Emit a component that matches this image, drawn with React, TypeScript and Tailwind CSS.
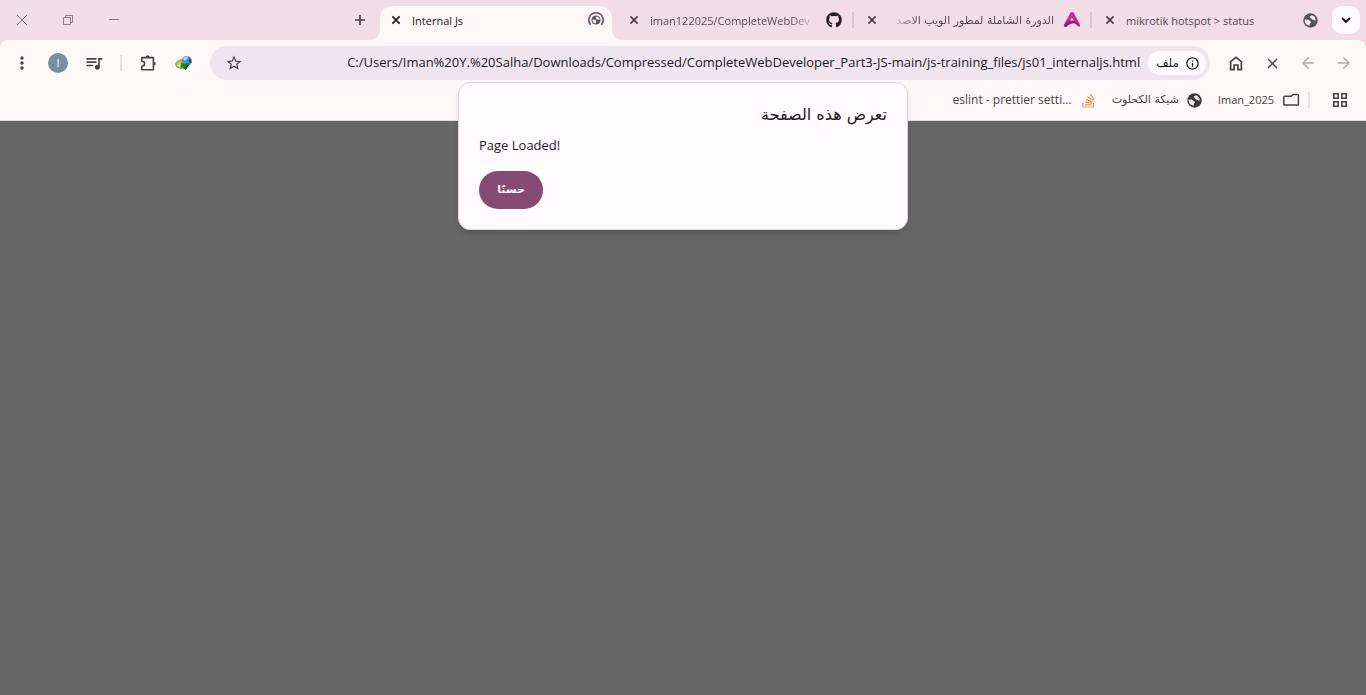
import type { ReactNode } from "react";
import { FaGithub } from "react-icons/fa";
import {
  MdArrowBack,
  MdArrowForward,
  MdClose,
  MdInfoOutline,
  MdMoreVert,
  MdQueueMusic,
  MdStarBorder,
} from "react-icons/md";

const iconButton = "flex h-7 w-7 shrink-0 items-center justify-center rounded-full";

function Globe({ size, color }: { size: number; color: string }) {
  return (
    <svg width={size} height={size} viewBox="0 0 16 16" aria-hidden="true">
      <circle cx="8" cy="8" r="7.7" fill={color} />
      <path
        d="M1.8 7.2 C3.6 6.8 5.8 7 6.8 8 C7.6 8.8 8.4 8.8 8.5 9.8 C8.6 10.8 7.4 10.8 7.2 11.8 V13.4 C4 13.2 1.5 11 1.8 7.2 Z"
        fill="#f6e8ee"
      />
      <path
        d="M9.2 2.4 C8.6 3.2 7.6 3 7.2 3.8 C6.8 4.6 7.8 5 8.6 5.2 C9 6.4 9.4 6.9 10.6 6.9 C11.2 7.9 12.4 8 13.6 8 C13.8 5.4 12 2.8 9.2 2.4 Z"
        fill="#f6e8ee"
      />
    </svg>
  );
}

function LoadingGlobe() {
  return (
    <svg width="16" height="16" viewBox="0 0 16 16" aria-hidden="true">
      <path d="M2.7 12.8 A7.2 7.2 0 1 1 13.3 12.8" fill="none" stroke="#854b73" strokeWidth="1.7" />
      <circle cx="8" cy="8" r="4.6" fill="#55555a" />
      <path d="M4.4 7.7 C6 7.4 7.6 8 8.2 9 L7.6 11.4 C5.8 11.2 4.3 9.6 4.4 7.7 Z" fill="#fff" />
      <path d="M8.7 4.6 L7.6 6 L9 7.4 L11.6 7.8 C11.6 6 10.2 4.8 8.7 4.6 Z" fill="#fff" />
    </svg>
  );
}

function AcademyLogo() {
  return (
    <svg width="18" height="18" viewBox="0 0 18 18" aria-hidden="true">
      <path d="M7.4 2 Q9 0 10.8 2 L17 13.6 Q17.6 16 15.6 15.6 Q13.4 14.8 12.4 12.4 L9 6.4 L5.8 11.6 Q4.4 15.6 1.8 15.8 Q0.2 15.4 1 13.4 Z" fill="#c42a92" />
      <path d="M1 15 Q3.6 9.4 9 9.4 Q13.6 9.8 16.8 14.8 Q12.6 11.6 9 12.6 Q5.6 13.4 3.4 15.8 Q1.6 16.6 1 15 Z" fill="#951c7c" />
    </svg>
  );
}

function DownloadManagerIcon() {
  return (
    <svg width="18" height="16" viewBox="0 0 18 16" aria-hidden="true">
      <ellipse cx="6.4" cy="9.2" rx="5.6" ry="4.2" fill="#b7d27a" stroke="#4f9a70" strokeWidth="1" />
      <path d="M1.6 8.2 Q3.4 3.2 8 3.8 L7 7.4 Q4 7 1.6 8.2 Z" fill="#e9a13c" />
      <path d="M2.8 10.8 Q4.6 8.2 7.6 9 L8 11.4 Q5 13 2.8 10.8 Z" fill="#f1df8a" />
      <circle cx="11.8" cy="6" r="5" fill="#4a90d0" />
      <path d="M8.2 3.4 Q10 0.9 13 1.6 Q12.4 5 9 6 Z" fill="#b4daf4" />
      <path d="M14.2 2.4 Q16.8 5 16.6 8 L13.8 7 Z" fill="#1c4776" />
      <path d="M6 7.4 L8.6 8.8 L14.8 8 L10.8 15 L7.4 12.6 L5.4 12.6 Z" fill="#198a22" />
      <path d="M14.8 8 L10.8 15 L9.6 12.4 Z" fill="#0a4d12" />
    </svg>
  );
}

function Puzzle() {
  return (
    <svg width="18" height="18" viewBox="0 0 18 18" fill="none" stroke="#4b4146" aria-hidden="true">
      <path
        d="M2.8 3.6 H14.4 V15.8 H2.8 V12.2 C4.6 12.2 5.6 11 5.6 9.7 C5.6 8.4 4.6 7.2 2.8 7.2 Z"
        strokeWidth="1.6"
        strokeLinejoin="round"
      />
      <path d="M6.8 3.2 A1.9 1.9 0 0 1 10.6 3.2 Z M14.8 7.8 A1.9 1.9 0 0 1 14.8 11.6 Z" fill="#4b4146" stroke="none" />
    </svg>
  );
}

function Home() {
  return (
    <svg width="14" height="15" viewBox="0 0 14 15" fill="none" stroke="#4b4146" strokeWidth="1.7" aria-hidden="true">
      <path d="M1.6 5.7 L7 1.4 L12.4 5.7 V13.6 H8.9 V9 H5.1 V13.6 H1.6 Z" />
    </svg>
  );
}

function Folder() {
  return (
    <svg width="18" height="14" viewBox="0 0 18 14" fill="none" stroke="#4b4146" strokeWidth="1.5" aria-hidden="true">
      <path d="M2.6 3.2 H9.2 L11 1.6 H15.6 Q16.4 1.6 16.4 2.4 V11.2 Q16.4 12 15.6 12 H2.6 Q1.8 12 1.8 11.2 V4 Q1.8 3.2 2.6 3.2 Z" />
    </svg>
  );
}

function StackLogo() {
  return (
    <svg width="14" height="15" viewBox="0 0 14 15" fill="none" aria-hidden="true">
      <path d="M1 9.5 V14 H11.4 V9.5" stroke="#b9a99a" strokeWidth="1.2" />
      <path d="M3 11.8 H9.6 M3.2 9.2 L9.8 10.4 M4 6.4 L10.2 9 M5.6 3.6 L11 7.6 M8.4 1.2 L12.2 6.6" stroke="#ea9440" strokeWidth="1.2" />
    </svg>
  );
}

function TabCross() {
  return (
    <svg width="10" height="10" viewBox="0 0 10 10" fill="none" stroke="currentColor" strokeWidth="1.7" aria-hidden="true">
      <path d="M1.4 1.4 L8.6 8.6 M8.6 1.4 L1.4 8.6" />
    </svg>
  );
}

function Tab({ title, icon, rtl = false, fade = true }: { title: string; icon: ReactNode; rtl?: boolean; fade?: boolean }) {
  return (
    <div className="min-w-0 flex-[236]">
      <div className="flex h-6 items-center gap-2 pl-2.5 pr-2">
        <button aria-label={"Close " + title} className="flex h-4 w-4 shrink-0 items-center justify-center text-[#4b3f45]">
          <TabCross />
        </button>
        <a
          href="#tab"
          dir={rtl ? "rtl" : "ltr"}
          className={
            "min-w-0 flex-1 overflow-hidden whitespace-nowrap pt-0.5 text-[11px] text-[#594a51] " +
            (rtl
              ? "font-['DejaVu_Sans',sans-serif] [mask-image:linear-gradient(to_left,#000_80%,transparent)]"
              : fade
                ? "[mask-image:linear-gradient(to_right,#000_85%,transparent)]"
                : "")
          }
        >
          {title}
        </a>
        <span className="flex w-5 shrink-0 justify-center">{icon}</span>
      </div>
    </div>
  );
}

function TabStrip() {
  return (
    <header className="flex h-10 items-center bg-[#f2dce5]">
      <div className="flex flex-[380] items-center justify-between">
        <div className="flex items-center text-[#8e7d85]">
          <button aria-label="Close window" className="flex h-8 w-11 items-center justify-center">
            <svg width="12" height="12" viewBox="0 0 12 12" stroke="currentColor" fill="none">
              <path d="M1 1 L11 11 M11 1 L1 11" />
            </svg>
          </button>
          <button aria-label="Restore window" className="flex h-8 w-12 items-center justify-center">
            <svg width="12" height="12" viewBox="0 0 12 12" stroke="currentColor" fill="none">
              <path d="M1.5 3.5 H8.5 V10.5 H1.5 Z M3.5 3.5 V1.5 H10.5 V8.5 H8.5" />
            </svg>
          </button>
          <button aria-label="Minimize window" className="flex h-8 w-11 items-center justify-center">
            <svg width="12" height="12" viewBox="0 0 12 12" stroke="currentColor" fill="none">
              <path d="M1 5.5 H11" />
            </svg>
          </button>
        </div>
        <button aria-label="New tab" className="flex h-7 w-10 items-center justify-center text-[#4b3f45]">
          <svg width="12" height="12" viewBox="0 0 12 12" stroke="currentColor" strokeWidth="1.7" fill="none">
            <path d="M6 1 V11 M1 6 H11" />
          </svg>
        </button>
      </div>
      <nav aria-label="Tabs" className="flex min-w-0 flex-[948] items-center self-stretch">
        <div className="relative mr-1 flex h-[34px] min-w-0 flex-[232] items-center self-end rounded-t-xl bg-[#fef7f7] pb-1.5">
          <svg width="10" height="10" viewBox="0 0 10 10" className="absolute -left-2.5 bottom-0" fill="#fef7f7" aria-hidden="true">
            <path d="M10 0 V10 H0 A10 10 0 0 0 10 0 Z" />
          </svg>
          <svg width="10" height="10" viewBox="0 0 10 10" className="absolute -right-2.5 bottom-0" fill="#fef7f7" aria-hidden="true">
            <path d="M0 0 V10 H10 A10 10 0 0 1 0 0 Z" />
          </svg>
          <div className="flex min-w-0 flex-1 items-center gap-2 px-2">
            <button aria-label="Close Internal Js" className="flex h-4 w-4 items-center justify-center text-[#211a1e]">
              <TabCross />
            </button>
            <a href="#tab" className="min-w-0 flex-1 truncate pt-0.5 text-[11px] text-[#211a1e]">Internal Js</a>
            <LoadingGlobe />
          </div>
        </div>
        <Tab title="iman122025/CompleteWebDev" icon={<FaGithub size={16} color="#24202a" />} />
        <span className="h-4 w-0.5 bg-[#dcc5cf]" />
        <Tab title="الدورة الشاملة لمطور الويب الاصد" rtl icon={<AcademyLogo />} />
        <span className="h-4 w-0.5 bg-[#dcc5cf]" />
        <Tab title="mikrotik hotspot &gt; status" fade={false} icon={<Globe size={15} color="#55515a" />} />
      </nav>
      <button aria-label="Search tabs" className="ml-1 mr-1.5 flex h-7 w-7 shrink-0 items-center justify-center rounded-[10px] bg-[#fffbfe]">
        <svg width="10" height="8" viewBox="0 0 10 8" fill="none" stroke="#111" strokeWidth="1.8">
          <path d="M1 2 L5 6 L9 2" />
        </svg>
      </button>
    </header>
  );
}

function Toolbar() {
  return (
    <div className="flex h-[46px] items-center gap-2 px-2 text-[#4b4146]">
      <button aria-label="Menu" className={iconButton}><MdMoreVert size={20} /></button>
      <button aria-label="Profile" className={iconButton}>
        <span className="flex h-5 w-5 items-center justify-center rounded-full bg-[#78909c] text-[11px] leading-5 text-white">I</span>
      </button>
      <button aria-label="Media" className={iconButton}><MdQueueMusic size={20} /></button>
      <span className="mx-1 h-4 w-0.5 bg-[#f6dbe7]" />
      <button aria-label="Extensions" className={iconButton}><Puzzle /></button>
      <button aria-label="Download manager" className={iconButton}><DownloadManagerIcon /></button>
      <div className="ml-1 flex h-[34px] min-w-0 flex-1 items-center gap-2 rounded-full bg-[#f0e4ef] pl-2.5 pr-1">
        <button aria-label="Bookmark" className={iconButton}><MdStarBorder size={18} /></button>
        <input
          aria-label="Address"
          dir="ltr"
          defaultValue="C:/Users/Iman%20Y.%20Salha/Downloads/Compressed/CompleteWebDeveloper_Part3-JS-main/js-training_files/js01_internaljs.html"
          className="min-w-0 flex-1 bg-transparent text-right text-[13px] text-[#211a1e] outline-none"
        />
        <button className="flex h-6 shrink-0 items-center gap-1.5 rounded-full bg-[#fffbfe] pl-2 pr-1.5 text-[#211a1e]">
          <span className="font-['DejaVu_Sans',sans-serif] text-xs">ملف</span>
          <MdInfoOutline size={15} />
        </button>
      </div>
      <div className="flex items-center gap-2 pl-1">
        <button aria-label="Home" className={iconButton}><Home /></button>
        <button aria-label="Stop" className={iconButton}><MdClose size={17} /></button>
        <button aria-label="Back" className={iconButton + " text-[#b3a9ad]"}><MdArrowBack size={18} /></button>
        <button aria-label="Forward" className={iconButton + " text-[#b3a9ad]"}><MdArrowForward size={18} /></button>
      </div>
    </div>
  );
}

function Bookmarks() {
  return (
    <nav aria-label="Bookmarks" className="flex h-[35px] items-center justify-end border-b border-[#e5dbde] pb-1.5 pr-4 text-[#4b4146]">
      <a href="#eslint" className="mr-4 flex items-center gap-2.5 text-xs">eslint - prettier setti...<StackLogo /></a>
      <a href="#network" className="mr-4 flex items-center gap-2">
        <span className="font-['DejaVu_Sans',sans-serif] text-[11px]">شبكة الكحلوت</span>
        <Globe size={15} color="#3a373c" />
      </a>
      <a href="#folder" className="mr-2 flex items-center gap-2 text-[11px]">Iman_2025<Folder /></a>
      <span className="mr-5 h-4 w-0.5 bg-[#f9d9e8]" />
      <button aria-label="Apps" className="flex h-5 w-5 items-center justify-center">
        <svg width="16" height="16" viewBox="0 0 16 16" fill="none" stroke="#4b4146" strokeWidth="1.6">
          <path d="M1.8 1.8 H6.2 V6.2 H1.8 Z M9.8 1.8 H14.2 V6.2 H9.8 Z M1.8 9.8 H6.2 V14.2 H1.8 Z M9.8 9.8 H14.2 V14.2 H9.8 Z" />
        </svg>
      </button>
    </nav>
  );
}

export default function App() {
  return (
    <div className="relative flex min-h-screen flex-col bg-[#666666] font-['Open_Sans','DejaVu_Sans',sans-serif]">
      <TabStrip />
      <div className="bg-[#f2dce5]">
        <div className="rounded-t-lg bg-[#fef7f7]">
          <Toolbar />
          <Bookmarks />
        </div>
      </div>
      <main className="flex-1" />
      <section
        role="dialog"
        aria-labelledby="dialog-title"
        className="absolute left-1/2 top-[82px] w-[450px] max-w-full -translate-x-1/2 rounded-xl border border-[#dfd5dc] bg-[#fffbff] p-5 shadow-md"
      >
        <h1 id="dialog-title" dir="rtl" className="font-['DejaVu_Sans',sans-serif] text-base leading-6 text-[#1d1a1e]">تعرض هذه الصفحة</h1>
        <p className="mt-2 text-[13px] leading-5 text-[#1d1a1e]">Page Loaded!</p>
        <button className="mt-4 h-[38px] w-16 rounded-full bg-[#854b73] font-['DejaVu_Sans',sans-serif] text-[11px] font-bold text-white">حسنًا</button>
      </section>
    </div>
  );
}
